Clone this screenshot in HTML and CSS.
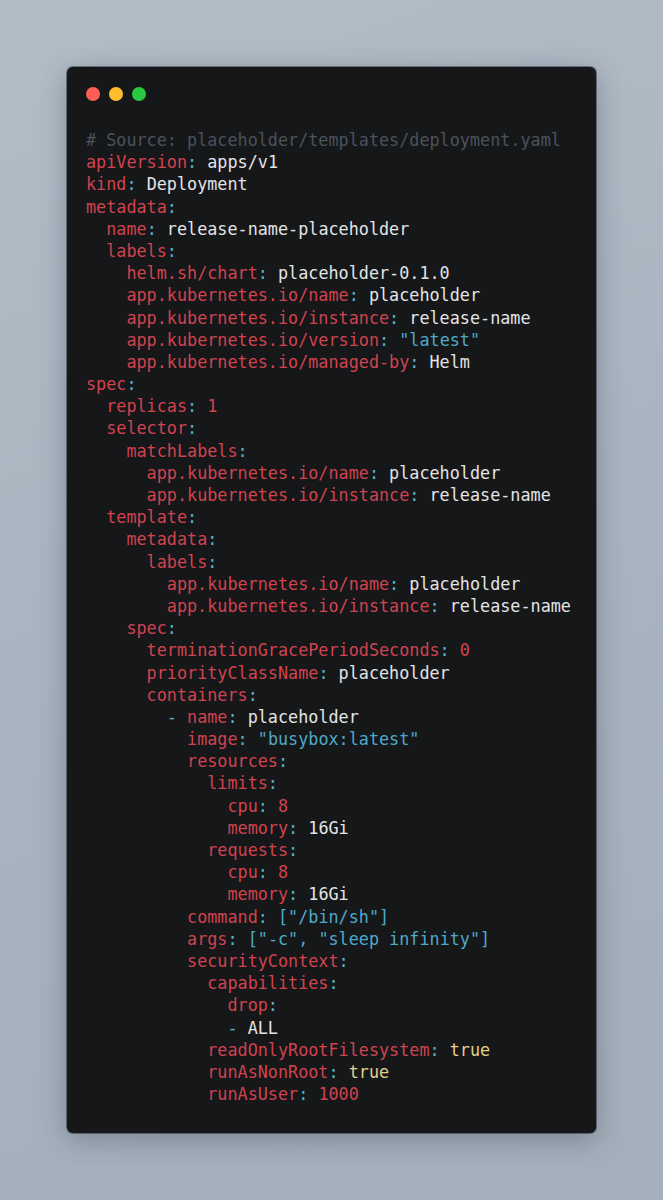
FILE: index.html
```html
<!DOCTYPE html>
<html>
<head>
<meta charset="utf-8">
<link rel="stylesheet" href="styles.css">
</head>
<body>
<div class="page">
  <div class="card">
    <div class="dots"><span class="dot red"></span><span class="dot yellow"></span><span class="dot green"></span></div>
    <div class="code">
      <div class="ln"><span class="c"># Source: placeholder/templates/deployment.yaml</span></div>
      <div class="ln"><span class="k">apiVersion</span><span class="p">:</span> apps/v1</div>
      <div class="ln"><span class="k">kind</span><span class="p">:</span> Deployment</div>
      <div class="ln"><span class="k">metadata</span><span class="p">:</span></div>
      <div class="ln i1"><span class="k">name</span><span class="p">:</span> release-name-placeholder</div>
      <div class="ln i1"><span class="k">labels</span><span class="p">:</span></div>
      <div class="ln i2"><span class="k">helm.sh/chart</span><span class="p">:</span> placeholder-0.1.0</div>
      <div class="ln i2"><span class="k">app.kubernetes.io/name</span><span class="p">:</span> placeholder</div>
      <div class="ln i2"><span class="k">app.kubernetes.io/instance</span><span class="p">:</span> release-name</div>
      <div class="ln i2"><span class="k">app.kubernetes.io/version</span><span class="p">:</span> <span class="s">"latest"</span></div>
      <div class="ln i2"><span class="k">app.kubernetes.io/managed-by</span><span class="p">:</span> Helm</div>
      <div class="ln"><span class="k">spec</span><span class="p">:</span></div>
      <div class="ln i1"><span class="k">replicas</span><span class="p">:</span> <span class="n">1</span></div>
      <div class="ln i1"><span class="k">selector</span><span class="p">:</span></div>
      <div class="ln i2"><span class="k">matchLabels</span><span class="p">:</span></div>
      <div class="ln i3"><span class="k">app.kubernetes.io/name</span><span class="p">:</span> placeholder</div>
      <div class="ln i3"><span class="k">app.kubernetes.io/instance</span><span class="p">:</span> release-name</div>
      <div class="ln i1"><span class="k">template</span><span class="p">:</span></div>
      <div class="ln i2"><span class="k">metadata</span><span class="p">:</span></div>
      <div class="ln i3"><span class="k">labels</span><span class="p">:</span></div>
      <div class="ln i4"><span class="k">app.kubernetes.io/name</span><span class="p">:</span> placeholder</div>
      <div class="ln i4"><span class="k">app.kubernetes.io/instance</span><span class="p">:</span> release-name</div>
      <div class="ln i2"><span class="k">spec</span><span class="p">:</span></div>
      <div class="ln i3"><span class="k">terminationGracePeriodSeconds</span><span class="p">:</span> <span class="n">0</span></div>
      <div class="ln i3"><span class="k">priorityClassName</span><span class="p">:</span> placeholder</div>
      <div class="ln i3"><span class="k">containers</span><span class="p">:</span></div>
      <div class="ln i4"><span class="p">-</span> <span class="k">name</span><span class="p">:</span> placeholder</div>
      <div class="ln i5"><span class="k">image</span><span class="p">:</span> <span class="s">"busybox:latest"</span></div>
      <div class="ln i5"><span class="k">resources</span><span class="p">:</span></div>
      <div class="ln i6"><span class="k">limits</span><span class="p">:</span></div>
      <div class="ln i7"><span class="k">cpu</span><span class="p">:</span> <span class="n">8</span></div>
      <div class="ln i7"><span class="k">memory</span><span class="p">:</span> 16Gi</div>
      <div class="ln i6"><span class="k">requests</span><span class="p">:</span></div>
      <div class="ln i7"><span class="k">cpu</span><span class="p">:</span> <span class="n">8</span></div>
      <div class="ln i7"><span class="k">memory</span><span class="p">:</span> 16Gi</div>
      <div class="ln i5"><span class="k">command</span><span class="p">:</span> <span class="s">["/bin/sh"]</span></div>
      <div class="ln i5"><span class="k">args</span><span class="p">:</span> <span class="s">["-c", "sleep infinity"]</span></div>
      <div class="ln i5"><span class="k">securityContext</span><span class="p">:</span></div>
      <div class="ln i6"><span class="k">capabilities</span><span class="p">:</span></div>
      <div class="ln i7"><span class="k">drop</span><span class="p">:</span></div>
      <div class="ln i7"><span class="p">-</span> ALL</div>
      <div class="ln i6"><span class="k">readOnlyRootFilesystem</span><span class="p">:</span> <span class="b">true</span></div>
      <div class="ln i6"><span class="k">runAsNonRoot</span><span class="p">:</span> <span class="b">true</span></div>
      <div class="ln i6"><span class="k">runAsUser</span><span class="p">:</span> <span class="n">1000</span></div>
    </div>
  </div>
</div>
</body>
</html>
```
FILE: styles.css
```css
html, body {
  margin: 0;
  padding: 0;
}
body {
  background: linear-gradient(160deg, #b3bdc7 0%, #a9b4c0 50%, #a3afbb 100%);
  min-height: 1200px;
}
.page {
  padding: 67px 67px 66px 67px;
}
.card {
  width: 529px;
  box-sizing: border-box;
  background: #161719;
  border-radius: 6px;
  padding: 20px 19px 28px 19px;
  box-shadow: 0 6px 28px rgba(40, 50, 65, 0.35), 0 0 0 1px rgba(60, 66, 74, 0.6);
}
.dots {
  display: flex;
  gap: 9px;
}
.dot {
  width: 14px;
  height: 14px;
  border-radius: 50%;
  display: block;
}
.dot.red { background: #ff5f57; }
.dot.yellow { background: #febc2e; }
.dot.green { background: #28c840; }
.code {
  margin-top: 28px;
  font-family: "DejaVu Sans Mono", monospace;
  font-size: 16.8px;
  line-height: 22.2px;
  color: #e3e4e6;
}
.ln {
  height: 22.2px;
  white-space: pre;
}
.i1 { padding-left: 2ch; }
.i2 { padding-left: 4ch; }
.i3 { padding-left: 6ch; }
.i4 { padding-left: 8ch; }
.i5 { padding-left: 10ch; }
.i6 { padding-left: 12ch; }
.i7 { padding-left: 14ch; }
.c { color: #4a525c; }
.k { color: #d0434f; }
.p { color: #56b4c4; }
.s { color: #4ea9c9; }
.n { color: #d0434f; }
.b { color: #e6cf8a; }
```
